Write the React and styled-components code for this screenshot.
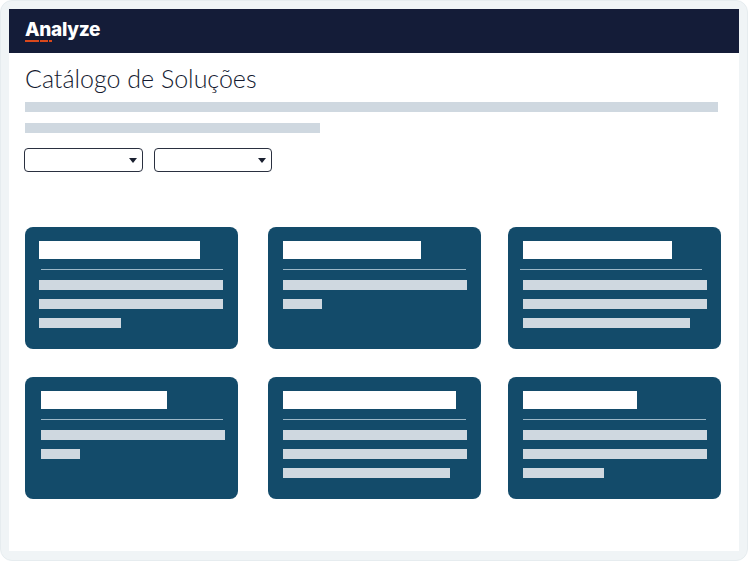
import React from 'react';
import styled, { createGlobalStyle } from 'styled-components';

const cards = [
  [
    { title: 161, left: 14, rule: [16, 198], bars: [184, 184, 82] },
    { title: 138, left: 15, rule: [15, 198], bars: [184, 39] },
    { title: 149, left: 15, rule: [12, 194], bars: [184, 184, 167] },
  ],
  [
    { title: 126, left: 16, rule: [16, 198], bars: [184, 39] },
    { title: 173, left: 15, rule: [15, 198], bars: [184, 184, 167] },
    { title: 114, left: 15, rule: [15, 198], bars: [184, 184, 81] },
  ],
];

export default function App() {
  return (
    <>
      <GlobalStyle />
      <Frame>
        <Screen>
          <Header>
            <LogoWrap>
              <Logo>Analyze</Logo>
              <LogoLine>
                <LogoDash $w={14} />
                <LogoDash $w={8} />
                <LogoDash $w={3} />
              </LogoLine>
            </LogoWrap>
          </Header>
          <Content>
            <Title>Catálogo de Soluções</Title>
            <IntroBar $w={693} />
            <IntroBar $w={295} />
            <Filters>
              <Dropdown $w={119}><Arrow /></Dropdown>
              <Dropdown $w={118}><Arrow /></Dropdown>
            </Filters>
            <CardRows>
              {cards.map((row, r) => (
                <CardRow key={r}>
                  {row.map((card, c) => (
                    <Card key={c}>
                      <CardTitle $w={card.title} $left={card.left} />
                      <CardRule $left={card.rule[0]} $w={card.rule[1] - card.rule[0]} />
                      <CardBars>
                        {card.bars.map((w, i) => (
                          <CardBar key={i} $w={w} $left={card.left} />
                        ))}
                      </CardBars>
                    </Card>
                  ))}
                </CardRow>
              ))}
            </CardRows>
          </Content>
        </Screen>
      </Frame>
    </>
  );
}

const GlobalStyle = createGlobalStyle`
  html, body {
    margin: 0;
    padding: 0;
    background: #fff;
  }
  * {
    box-sizing: border-box;
  }
`;

const Frame = styled.div`
  width: 748px;
  height: 561px;
  padding: 8px 8px 9px 8px;
  background: #f0f4f6;
  border: 1px solid #e6ecef;
  border-radius: 12px;
  font-family: 'Lato', sans-serif;
  overflow: hidden;
`;

const Screen = styled.div`
  height: 100%;
  background: #fff;
  display: flex;
  flex-direction: column;
`;

const Header = styled.div`
  height: 44px;
  flex: none;
  background: #141c38;
  padding: 9px 0 0 16px;
`;

const LogoWrap = styled.div`
  width: 76px;
  display: flex;
  flex-direction: column;
`;

const Logo = styled.div`
  font-family: 'Inter', sans-serif;
  font-weight: 800;
  font-size: 19px;
  line-height: 23px;
  letter-spacing: -0.3px;
  color: #fff;
`;

const LogoLine = styled.div`
  display: flex;
  gap: 1px;
  margin-top: -1px;
`;

const LogoDash = styled.span`
  width: ${(p) => p.$w}px;
  height: 2px;
  background: #d9481c;
`;

const Content = styled.div`
  flex: 1;
  padding: 0 0 0 16px;
`;

const Title = styled.h1`
  margin: 10px 0 0;
  height: 39px;
  font-family: 'Lato', sans-serif;
  font-weight: 300;
  font-size: 25px;
  line-height: 30px;
  color: #141a30;
`;

const IntroBar = styled.div`
  width: ${(p) => p.$w}px;
  height: 10px;
  margin-bottom: 11px;
  background: #cfd8e0;
`;

const Filters = styled.div`
  display: flex;
  gap: 11px;
  margin: 5px 0 0 -1px;
  padding-top: 4px;
`;

const Dropdown = styled.div`
  width: ${(p) => p.$w}px;
  height: 24px;
  display: flex;
  align-items: center;
  justify-content: flex-end;
  padding-right: 5px;
  border: 1px solid #2a3040;
  border-radius: 4px;
  background: #fff;
`;

const Arrow = styled.span`
  width: 0;
  height: 0;
  border-left: 4px solid transparent;
  border-right: 4px solid transparent;
  border-top: 5px solid #1a2030;
`;

const CardRows = styled.div`
  margin-top: 55px;
  display: flex;
  flex-direction: column;
  gap: 28px;
`;

const CardRow = styled.div`
  display: grid;
  grid-template-columns: 243px 240px 213px;
`;

const Card = styled.div`
  width: 213px;
  height: 122px;
  padding-top: 14px;
  background: #134b6a;
  border-radius: 8px;
`;

const CardTitle = styled.div`
  width: ${(p) => p.$w}px;
  height: 18px;
  margin-left: ${(p) => p.$left}px;
  background: #fff;
`;

const CardRule = styled.div`
  width: ${(p) => p.$w}px;
  height: 1px;
  margin: 10px 0 10px ${(p) => p.$left}px;
  background: #9db8c8;
`;

const CardBars = styled.div`
  display: flex;
  flex-direction: column;
  gap: 9px;
`;

const CardBar = styled.div`
  width: ${(p) => p.$w}px;
  height: 10px;
  margin-left: ${(p) => p.$left}px;
  background: #cfd8e0;
`;
